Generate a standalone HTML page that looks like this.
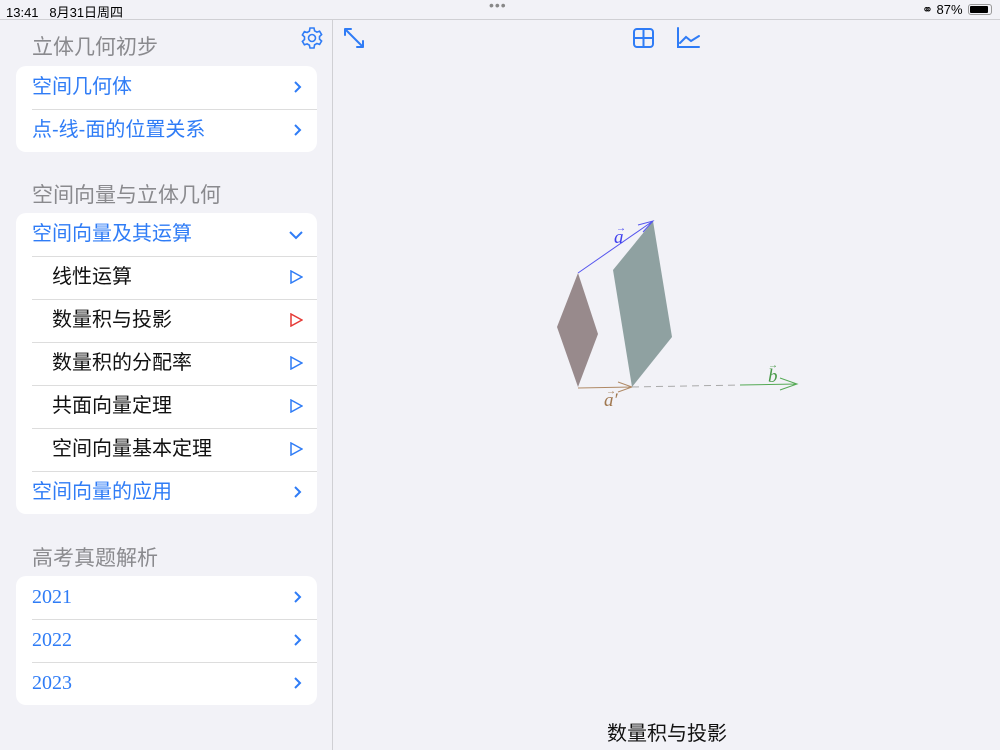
<!DOCTYPE html>
<html><head><meta charset="utf-8"><style>
*{margin:0;padding:0;box-sizing:border-box}
body{width:1000px;height:750px;background:#f2f2f7;font-family:"Liberation Sans","Noto Sans CJK SC",sans-serif;position:relative;overflow:hidden}
.status{position:absolute;left:0;top:0;width:1000px;height:20px;border-bottom:1px solid #d0d0d4;font-size:13px;color:#000}
.side{position:absolute;left:0;top:20px;width:333px;height:730px;border-right:1px solid #d0d0d4}
.h{position:absolute;left:32px;font-size:21px;color:#8a8a8e;line-height:26px}
.card{position:absolute;left:16px;width:301px;background:#fff;border-radius:10px;overflow:hidden}
.row{height:43px;position:relative;font-size:20px;line-height:42px;padding-left:16px;color:#2f7cf6}
.row+.row:before{content:"";position:absolute;left:16px;right:0;top:0;border-top:1px solid #ddd}
.sub{padding-left:36px;color:#111}
.row svg{position:absolute;right:14px;top:14px}
.num{font-family:"Liberation Serif",serif}
</style></head><body>
<div class="status"><span style="position:absolute;left:6px;top:2px">13:41&nbsp;&nbsp;&nbsp;8月31日周四</span>
<span style="position:absolute;left:489px;top:-3px;color:#888;font-size:14px;letter-spacing:1px">•••</span>
<span style="position:absolute;left:922px;top:2px">⚭ 87%</span>
<span style="position:absolute;left:968px;top:4px;width:24px;height:11px;border:1px solid #999;border-radius:3px;padding:1px"><span style="display:block;width:18px;height:7px;background:#000;border-radius:1px"></span></span></div>
<div class="side">
<svg style="position:absolute;left:300px;top:6px" width="24" height="24" viewBox="0 0 24 24" fill="none" stroke="#2f7cf6" stroke-width="1.6"><circle cx="12" cy="12" r="3.5"/><path d="M10 2h4l.6 2.8 2.3 1.3 2.7-.9 2 3.4-2.1 1.9v2.6l2.1 1.9-2 3.4-2.7-.9-2.3 1.3L14 22h-4l-.6-2.8-2.3-1.3-2.7.9-2-3.4 2.1-1.9v-2.6L2.4 9l2-3.4 2.7.9 2.3-1.3z"/></svg>
<div class="h" style="top:15px">立体几何初步</div>
<div class="card" style="top:46px">
<div class="row">空间几何体<svg width="10" height="14"><path d="M2 2l5 5-5 5" stroke="#2f7cf6" stroke-width="2" fill="none"/></svg></div>
<div class="row">点-线-面的位置关系<svg width="10" height="14"><path d="M2 2l5 5-5 5" stroke="#2f7cf6" stroke-width="2" fill="none"/></svg></div>
</div>
<div class="h" style="top:163px">空间向量与立体几何</div>
<div class="card" style="top:193px">
<div class="row">空间向量及其运算<svg width="14" height="10" style="top:17px"><path d="M1 2l6 6 6-6" stroke="#2f7cf6" stroke-width="2" fill="none"/></svg></div>
<div class="row sub">线性运算<svg width="14" height="14"><path d="M2 1l11 6-11 6z" stroke="#2f7cf6" stroke-width="1.5" fill="none"/></svg></div>
<div class="row sub">数量积与投影<svg width="14" height="14"><path d="M2 1l11 6-11 6z" stroke="#e53935" stroke-width="1.5" fill="none"/></svg></div>
<div class="row sub">数量积的分配率<svg width="14" height="14"><path d="M2 1l11 6-11 6z" stroke="#2f7cf6" stroke-width="1.5" fill="none"/></svg></div>
<div class="row sub">共面向量定理<svg width="14" height="14"><path d="M2 1l11 6-11 6z" stroke="#2f7cf6" stroke-width="1.5" fill="none"/></svg></div>
<div class="row sub">空间向量基本定理<svg width="14" height="14"><path d="M2 1l11 6-11 6z" stroke="#2f7cf6" stroke-width="1.5" fill="none"/></svg></div>
<div class="row">空间向量的应用<svg width="10" height="14"><path d="M2 2l5 5-5 5" stroke="#2f7cf6" stroke-width="2" fill="none"/></svg></div>
</div>
<div class="h" style="top:526px">高考真题解析</div>
<div class="card" style="top:556px">
<div class="row num">2021<svg width="10" height="14"><path d="M2 2l5 5-5 5" stroke="#2f7cf6" stroke-width="2" fill="none"/></svg></div>
<div class="row num">2022<svg width="10" height="14"><path d="M2 2l5 5-5 5" stroke="#2f7cf6" stroke-width="2" fill="none"/></svg></div>
<div class="row num">2023<svg width="10" height="14"><path d="M2 2l5 5-5 5" stroke="#2f7cf6" stroke-width="2" fill="none"/></svg></div>
</div>
</div>
<svg style="position:absolute;left:0;top:0" width="1000" height="750">
<g stroke="#2f7cf6" stroke-width="2" fill="none" stroke-linecap="round">
<path d="M345 29l18 18M345 29h6M345 29v6M363 47h-6M363 47v-6"/>
<rect x="634" y="29" width="19" height="18" rx="3"/><path d="M643.5 29v18M634 38h19"/>
<path d="M678 28v19h21M680 43l6-6 5 4 8-5"/>
</g>
<path d="M578 273L557 327L578 387L598 334Z" fill="#988a8c"/>
<path d="M613 270L653 221L672 337L632 387Z" fill="#8fa1a1"/>
<g fill="none">
<path d="M578 273L653 221M638 225L653 221L643 232" stroke="#5555ee" stroke-width="1"/>
<path d="M578 388L632 387M618 382L632 387L618 392" stroke="#b08a66" stroke-width="1"/>
<path d="M632 387L740 385" stroke="#aaa" stroke-width="1" stroke-dasharray="7,5"/>
<path d="M740 385L797 384M780 378L797 384L780 390" stroke="#55aa55" stroke-width="1"/>
</g>
<text x="614" y="243" font-family="Liberation Serif,serif" font-style="italic" font-size="19" fill="#4040ee">a</text>
<text x="616" y="231" font-size="10" fill="#4040ee">→</text>
<text x="604" y="406" font-family="Liberation Serif,serif" font-style="italic" font-size="19" fill="#a07850">a′</text>
<text x="606" y="394" font-size="10" fill="#a07850">→</text>
<text x="768" y="382" font-family="Liberation Serif,serif" font-style="italic" font-size="19" fill="#4a9a4a">b</text>
<text x="768" y="368" font-size="10" fill="#4a9a4a">→</text>
<text x="667" y="740" text-anchor="middle" font-family="Liberation Sans,Noto Sans CJK SC,sans-serif" font-size="20" fill="#111">数量积与投影</text>
</svg>
</body></html>
